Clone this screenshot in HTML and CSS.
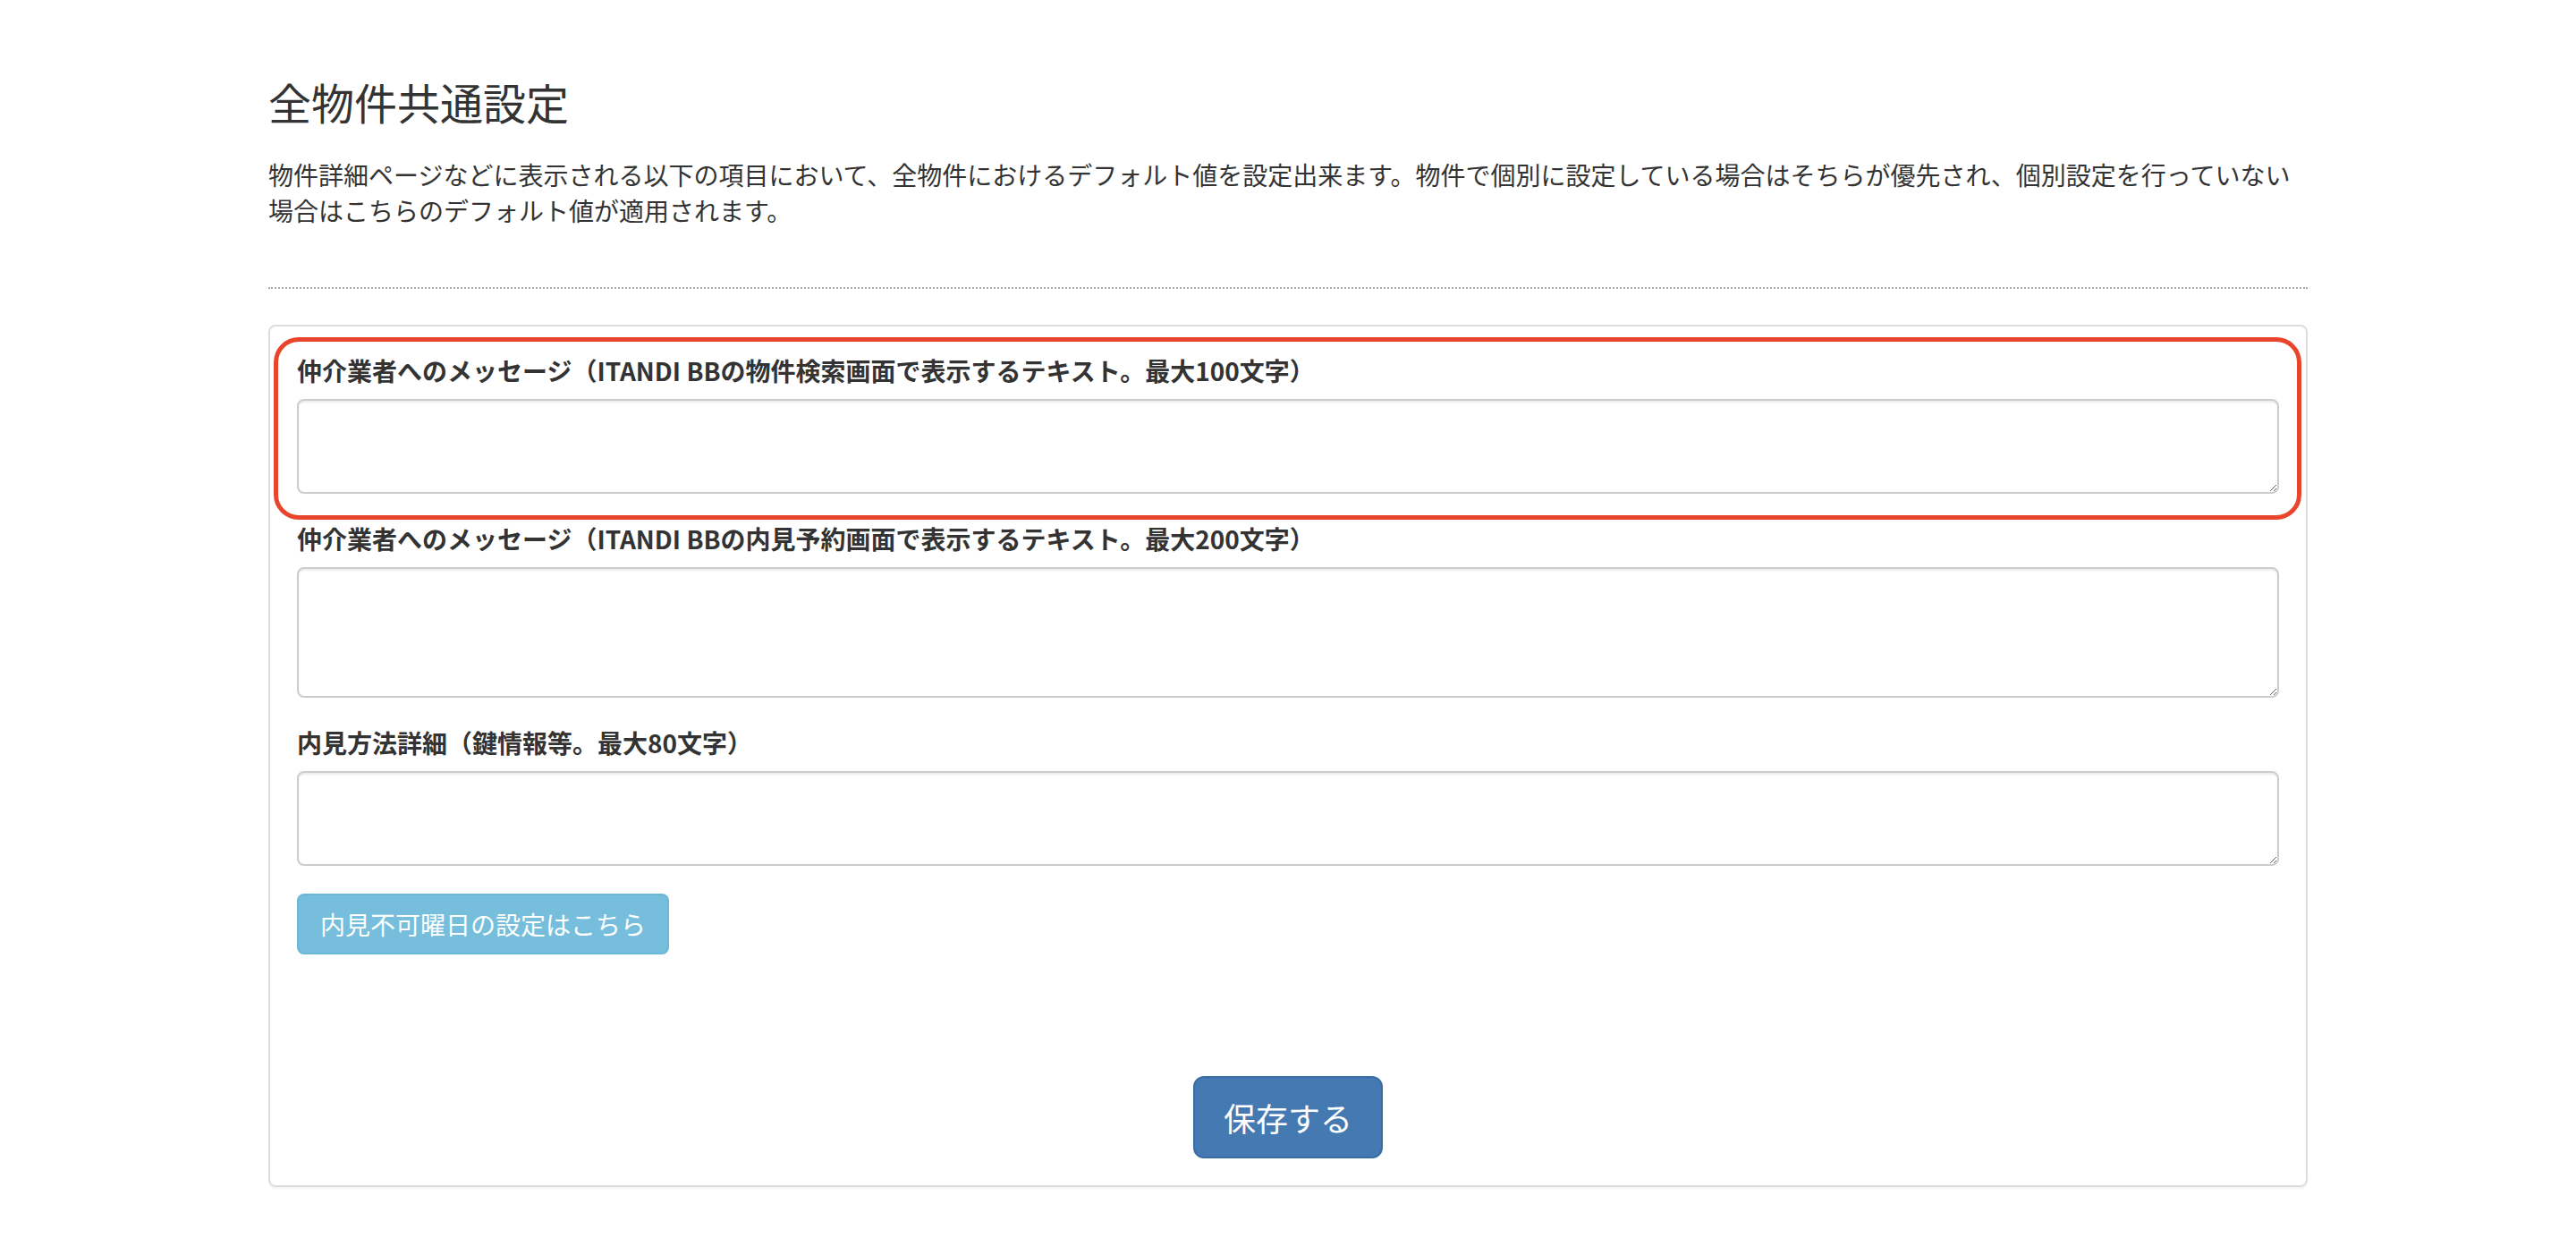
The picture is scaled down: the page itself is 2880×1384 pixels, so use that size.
FILE: index.html
```html
<!DOCTYPE html>
<html lang="ja">
<head>
    <meta charset="UTF-8">
    <meta name="viewport" content="width=device-width, initial-scale=1.0">
    <title>全物件共通設定</title>
    <link rel="stylesheet" href="styles.css">
</head>
<body>
    <div class="container">
        <h3 class="page-title">全物件共通設定</h3>
        <p class="lead-text">物件詳細ページなどに表示される以下の項目において、全物件におけるデフォルト値を設定出来ます。物件で個別に設定している場合はそちらが優先され、個別設定を行っていない場合はこちらのデフォルト値が適用されます。</p>

        <hr class="dotted">

        <form class="panel">
            <div class="highlight"></div>

            <div class="form-group">
                <label for="searchMessage">仲介業者へのメッセージ（ITANDI BBの物件検索画面で表示するテキスト。最大100文字）</label>
                <textarea id="searchMessage" class="form-control short"></textarea>
            </div>

            <div class="form-group">
                <label for="reserveMessage">仲介業者へのメッセージ（ITANDI BBの内見予約画面で表示するテキスト。最大200文字）</label>
                <textarea id="reserveMessage" class="form-control tall"></textarea>
            </div>

            <div class="form-group">
                <label for="keyInfo">内見方法詳細（鍵情報等。最大80文字）</label>
                <textarea id="keyInfo" class="form-control short"></textarea>
            </div>

            <button type="button" class="btn btn-info">内見不可曜日の設定はこちら</button>

            <div class="actions">
                <button type="submit" class="btn btn-primary btn-lg">保存する</button>
            </div>
        </form>
    </div>
</body>
</html>
```

FILE: styles.css
```css
* {
    box-sizing: border-box;
}
body {
    margin: 0;
    background: #fff;
    color: #333;
    font-family: "Noto Sans CJK JP", "Noto Sans", sans-serif;
    font-size: 28px;
    line-height: 40px;
}
.container {
    width: 2340px;
    margin: 0 auto;
    padding: 87px 30px 40px;
}
.page-title {
    margin: 0 0 35px;
    font-size: 48px;
    font-weight: 400;
    line-height: 53px;
}
.lead-text {
    margin: 0;
}
hr.dotted {
    margin: 66px 0 0;
    border: 0;
    border-top: 2px dotted #aaa;
}
.panel {
    position: relative;
    margin-top: 40px;
    padding: 29px 30px 30px;
    border: 2px solid #ddd;
    border-radius: 8px;
    box-shadow: 0 2px 2px rgba(0,0,0,0.05);
}
.highlight {
    position: absolute;
    left: 4px;
    top: 12px;
    width: 2267px;
    height: 204px;
    border: 5px solid #e8452c;
    border-radius: 28px;
    pointer-events: none;
}
.form-group {
    margin-bottom: 30px;
}
label {
    display: block;
    margin-bottom: 12px;
    font-weight: bold;
}
.form-control {
    display: block;
    width: 100%;
    padding: 12px 24px;
    border: 2px solid #ccc;
    border-radius: 8px;
    box-shadow: inset 0 2px 2px rgba(0,0,0,0.075);
    font: inherit;
    color: #555;
}
.form-control.short {
    height: 106px;
}
.form-control.tall {
    height: 146px;
}
.btn {
    display: inline-block;
    margin: 0;
    padding: 12px 24px;
    border: 2px solid transparent;
    border-radius: 8px;
    font-family: inherit;
    font-size: 28px;
    line-height: 40px;
    color: #fff;
    cursor: pointer;
}
.btn-info {
    margin-top: 1px;
    background-color: #76bedc;
    border-color: #6bb7d8;
}
.actions {
    margin-top: 136px;
    text-align: center;
}
.btn-primary {
    background-color: #4579b2;
    border-color: #3a6ca4;
}
.btn-lg {
    padding: 20px 32px;
    font-size: 36px;
    line-height: 48px;
    border-radius: 12px;
}
```
